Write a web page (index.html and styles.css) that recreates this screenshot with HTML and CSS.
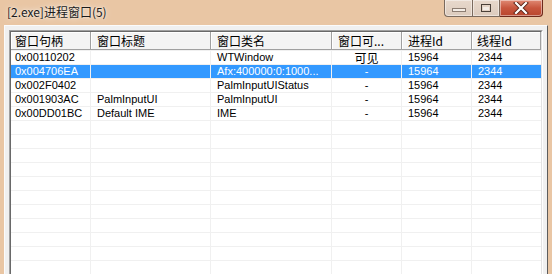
FILE: index.html
```html
<!DOCTYPE html>
<html lang="zh-CN">
<head>
    <meta charset="UTF-8">
    <link rel="stylesheet" href="styles.css">
    <title>[2.exe]进程窗口(5)</title>
</head>
<body>

    <div class="window">
        <div class="titlebar">
            <span class="title">[2.exe]进程窗口(5)</span>
            <div class="caption-buttons">
                <button class="cap-btn min-btn" type="button">
                    <svg width="16" height="6" viewBox="0 0 16 6"><rect x="1.5" y="1.5" width="13" height="3" fill="#f4ede6" stroke="#8c7d72"/></svg>
                </button>
                <button class="cap-btn max-btn" type="button">
                    <svg width="12" height="10" viewBox="0 0 12 10"><rect x="1.5" y="1.5" width="9" height="7" fill="none" stroke="#4a4038"/><rect x="3" y="4" width="6" height="3" fill="#f4ede6"/></svg>
                </button>
                <button class="cap-btn close-btn" type="button">
                    <svg width="16" height="12" viewBox="0 0 16 12"><path d="M3 1 L13 11 M13 1 L3 11" stroke="#5a2418" stroke-width="4" stroke-linecap="square"/><path d="M3 1 L13 11 M13 1 L3 11" stroke="#ffffff" stroke-width="2.2" stroke-linecap="square"/></svg>
                </button>
            </div>
        </div>

        <div class="client">
            <div class="list">
                <div class="list-inner">
                    <table class="grid">
                        <thead>
                            <tr>
                                <th class="c1">窗口句柄</th>
                                <th class="c2">窗口标题</th>
                                <th class="c3">窗口类名</th>
                                <th class="c4">窗口可...</th>
                                <th class="c5">进程Id</th>
                                <th class="c6">线程Id</th>
                            </tr>
                        </thead>
                        <tbody>
                            <tr>
                                <td class="c1">0x00110202</td><td></td><td>WTWindow</td><td class="center cjk">可见</td><td>15964</td><td>2344</td>
                            </tr>
                            <tr class="selected">
                                <td class="c1">0x004706EA</td><td></td><td>Afx:400000:0:1000...</td><td class="center">-</td><td>15964</td><td>2344</td>
                            </tr>
                            <tr>
                                <td class="c1">0x002F0402</td><td></td><td>PalmInputUIStatus</td><td class="center">-</td><td>15964</td><td>2344</td>
                            </tr>
                            <tr>
                                <td class="c1">0x001903AC</td><td>PalmInputUI</td><td>PalmInputUI</td><td class="center">-</td><td>15964</td><td>2344</td>
                            </tr>
                            <tr>
                                <td class="c1">0x00DD01BC</td><td>Default IME</td><td>IME</td><td class="center">-</td><td>15964</td><td>2344</td>
                            </tr>
                            <tr><td></td><td></td><td></td><td></td><td></td><td></td></tr>
                            <tr><td></td><td></td><td></td><td></td><td></td><td></td></tr>
                            <tr><td></td><td></td><td></td><td></td><td></td><td></td></tr>
                            <tr><td></td><td></td><td></td><td></td><td></td><td></td></tr>
                            <tr><td></td><td></td><td></td><td></td><td></td><td></td></tr>
                            <tr><td></td><td></td><td></td><td></td><td></td><td></td></tr>
                            <tr><td></td><td></td><td></td><td></td><td></td><td></td></tr>
                            <tr><td></td><td></td><td></td><td></td><td></td><td></td></tr>
                            <tr><td></td><td></td><td></td><td></td><td></td><td></td></tr>
                            <tr><td></td><td></td><td></td><td></td><td></td><td></td></tr>
                            <tr><td></td><td></td><td></td><td></td><td></td><td></td></tr>
                            <tr><td></td><td></td><td></td><td></td><td></td><td></td></tr>
                        </tbody>
                    </table>
                </div>
            </div>
        </div>
    </div>

</body>
</html>
```

FILE: styles.css
```css
html, body {
    margin: 0;
    height: 100%;
    overflow: hidden;
}

body {
    background-color: #e9c6a4; /* cadre Aero */
    font-family: "Liberation Sans", "Noto Sans CJK SC", sans-serif;
    font-size: 11px;
    color: #000;
}

.window {
    width: 552px;
}

.titlebar {
    height: 25px;
    display: flex;
    justify-content: space-between;
    align-items: flex-start;
}

.title {
    padding: 3px 0 0 7px;
    font-family: "Noto Sans CJK SC", sans-serif;
    font-size: 12px;
    line-height: 17px;
    color: #1a1a1a;
    text-shadow: 0 0 6px rgba(255, 255, 255, 0.9), 0 0 2px rgba(255, 255, 255, 0.8);
}

.caption-buttons {
    display: flex;
    margin-right: 9px;
}

.cap-btn {
    height: 17px;
    padding: 0;
    margin: 0;
    border: 1px solid #7a6a5e;
    border-top: none;
    display: flex;
    align-items: center;
    justify-content: center;
    box-shadow: inset 0 0 0 1px rgba(255, 255, 255, 0.45);
}

.min-btn {
    width: 28px;
    border-right: none;
    border-radius: 0 0 0 4px;
    background: linear-gradient(#e8d9cc, #dccbbd);
    padding-top: 4px;
}

.max-btn {
    width: 28px;
    background: linear-gradient(#e8d9cc, #dccbbd);
}

.close-btn {
    width: 43px;
    border-left: none;
    border-color: #6e2a1c;
    border-radius: 0 0 4px 0;
    background: linear-gradient(#e08a74, #c8563e 50%, #b8452d);
}

.client {
    margin: 0 4px;
    height: 244px;
    background-color: #f0f0f0;
    border-left: 1px solid #fbfbfb;
    border-right: 1px solid #5c5c5c;
    border-top: 1px solid #fbfbfb;
    padding: 4px 4px 0 4px;
}

.list {
    box-sizing: border-box;
    border: 1px solid;
    border-color: #a0a0a0 #ffffff #ffffff #a0a0a0;
    border-bottom: none;
    height: 100%;
}

.list-inner {
    box-sizing: border-box;
    border: 1px solid;
    border-color: #696969 #e3e3e3 #e3e3e3 #696969;
    border-bottom: none;
    background-color: #fff;
    height: 100%;
    overflow: hidden;
}

.grid {
    border-collapse: separate;
    border-spacing: 0;
    table-layout: fixed;
    width: 530px;
}

.grid th,
.grid td {
    box-sizing: border-box;
    padding: 0 0 0 6px;
    white-space: nowrap;
    overflow: hidden;
    text-align: left;
}

.grid th {
    height: 18px;
    font-family: "Noto Sans CJK SC", sans-serif;
    font-size: 12px;
    font-weight: normal;
    line-height: 16px;
    background-color: #f4f4f4;
    border-right: 1px solid #a0a0a0;
    border-bottom: 1px solid #a0a0a0;
    box-shadow: inset 1px 1px 0 #ffffff;
}

.grid td {
    height: 14px;
    line-height: 13px;
    border-top: 1px solid #f0f0f0;
    border-right: 1px solid #f0f0f0;
}

.grid td:last-child {
    border-right: none;
}

.grid .c1 { width: 80px; padding-left: 4px; }
.grid .c2 { width: 120px; }
.grid .c3 { width: 121px; }
.grid .c4 { width: 70px; }
.grid .c5 { width: 70px; }
.grid .c6 { width: 69px; padding-left: 5px; }

.grid td.center {
    text-align: center;
    padding-left: 0;
}

.grid td.cjk {
    font-family: "Noto Sans CJK SC", sans-serif;
    font-size: 12px;
    line-height: 13px;
    overflow: visible;
}

.selected td {
    background-color: #3399ff;
    color: #fff;
}
```
